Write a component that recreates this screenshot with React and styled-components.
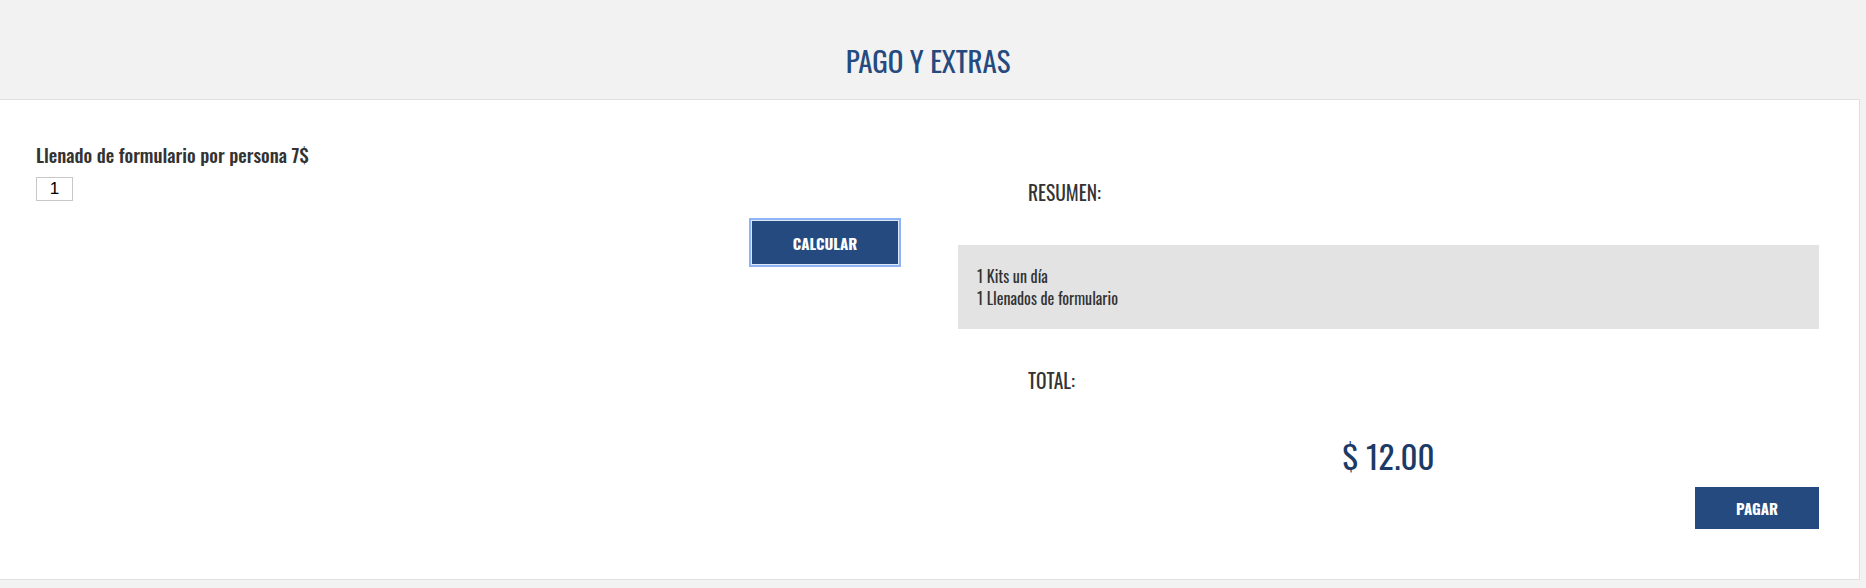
import React, { useState } from "react";
import styled, { createGlobalStyle } from "styled-components";

const GlobalStyle = createGlobalStyle`
  body {
    margin: 0;
    background: #f2f2f2;
    font-family: "Oswald", "Liberation Sans Narrow", "DejaVu Sans Condensed", "Liberation Sans", sans-serif;
    color: #333;
  }
`;

const Header = styled.header`
  height: 99px;
  padding-right: 10px;
  display: flex;
  justify-content: center;
  align-items: flex-start;
`;

const Title = styled.h2`
  margin: 45px 0 0;
  font-size: 29px;
  line-height: 30px;
  font-weight: 400;
  letter-spacing: -0.1px;
  color: #244a80;
`;

const Panel = styled.section`
  margin-right: 6px;
  background: #fff;
  border: 1px solid #e0e0e0;
  border-left: none;
  padding: 42px 40px 50px 36px;
  display: grid;
  grid-template-columns: 863px 1fr;
  column-gap: 59px;
`;

const LeftCol = styled.div`
  display: flex;
  flex-direction: column;
  align-items: flex-start;
`;

const FieldLabel = styled.label`
  font-size: 19px;
  line-height: 24px;
  font-weight: 500;
  color: #333;
`;

const QtyInput = styled.input`
  margin-top: 11px;
  width: 37px;
  height: 24px;
  box-sizing: border-box;
  border: 1px solid #c8c8c8;
  text-align: center;
  font-family: "Liberation Sans", Arial, sans-serif;
  font-size: 17px;
  color: #000;
  padding: 0;
  outline: none;
`;

const ActionButton = styled.button`
  box-sizing: border-box;
  width: ${(p) => p.$w}px;
  height: ${(p) => p.$h}px;
  background: #244a80;
  color: #fff;
  border: 1px solid ${(p) => (p.$focused ? "#dfe8f6" : "#244a80")};
  border-radius: 0;
  font-family: inherit;
  font-size: 15px;
  font-weight: 700;
  text-transform: uppercase;
  cursor: pointer;
  outline: ${(p) => (p.$focused ? "2px solid #8fb4f5" : "none")};
  outline-offset: 0;
`;

const CalcRow = styled.div`
  align-self: stretch;
  display: flex;
  justify-content: flex-end;
  margin-top: 19px;
`;

const RightCol = styled.div`
  display: flex;
  flex-direction: column;
`;

const SectionLabel = styled.h3`
  margin: ${(p) => p.$top}px 0 0;
  padding-left: 70px;
  font-size: 19.5px;
  line-height: 23px;
  font-weight: 400;
  color: #333;
`;

const SummaryBox = styled.div`
  margin-top: 41px;
  background: #e3e3e3;
  padding: 20px 19px;
  font-size: 16px;
  line-height: 22px;
  color: #333;
`;

const Price = styled.div`
  margin-top: 44px;
  text-align: center;
  font-size: 33px;
  line-height: 40px;
  color: #1c3a66;
`;

const PayRow = styled.div`
  display: flex;
  justify-content: flex-end;
  margin-top: 11px;
`;

const App = () => {
  const [forms, setForms] = useState(1);
  const [summary] = useState(["1 Kits un día", "1 Llenados de formulario"]);

  return (
    <>
      <GlobalStyle />
      <Header>
        <Title>PAGO Y EXTRAS</Title>
      </Header>
      <Panel>
        <LeftCol>
          <FieldLabel htmlFor="forms">Llenado de formulario por persona 7$</FieldLabel>
          <QtyInput
            id="forms"
            value={forms}
            onChange={(e) => setForms(e.target.value)}
          />
          <CalcRow>
            <ActionButton $w={148} $h={45} $focused>Calcular</ActionButton>
          </CalcRow>
        </LeftCol>
        <RightCol>
          <SectionLabel $top={39}>RESUMEN:</SectionLabel>
          <SummaryBox>
            {summary.map((line) => (
              <div key={line}>{line}</div>
            ))}
          </SummaryBox>
          <SectionLabel $top={40}>TOTAL:</SectionLabel>
          <Price>$ 12.00</Price>
          <PayRow>
            <ActionButton $w={124} $h={42}>Pagar</ActionButton>
          </PayRow>
        </RightCol>
      </Panel>
    </>
  );
};

export default App;
